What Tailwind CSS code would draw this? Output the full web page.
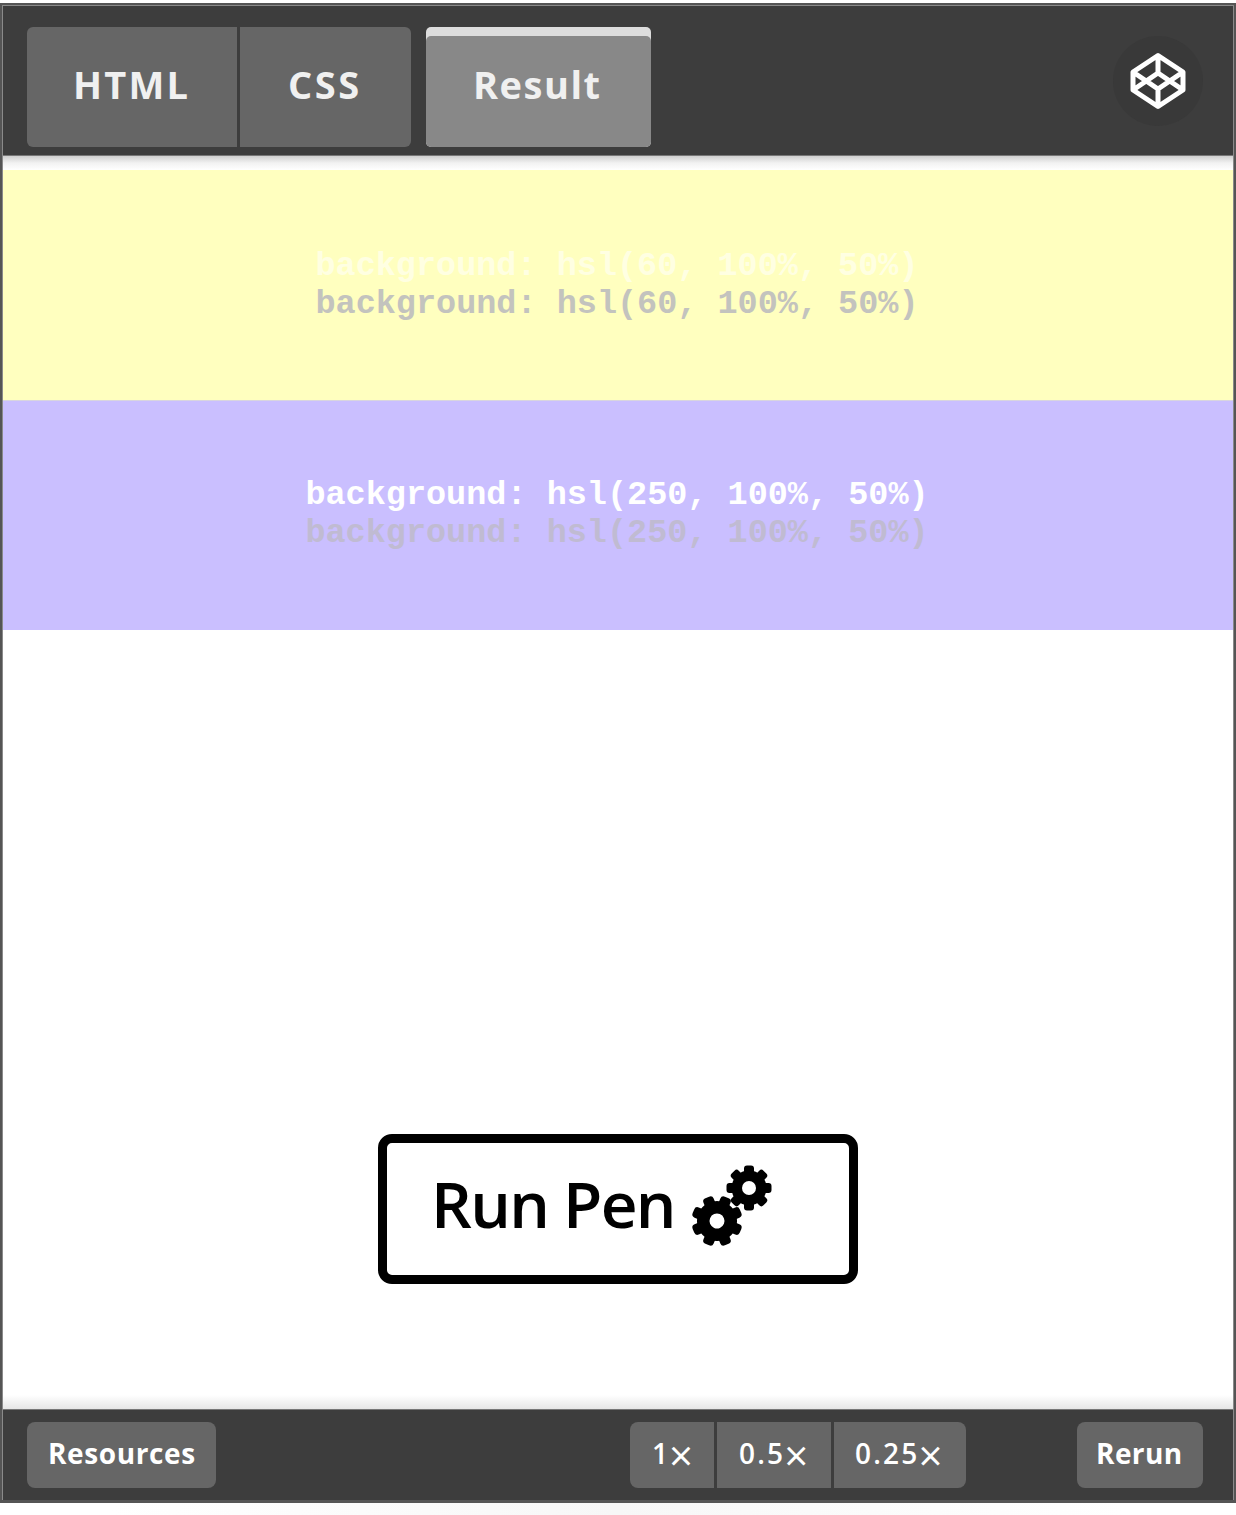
<!DOCTYPE html>
<html lang="en">
<head>
<meta charset="utf-8">
<title>Pen embed</title>
<script src="https://cdn.jsdelivr.net/npm/@tailwindcss/browser@4"></script>
</head>
<body class="bg-white overflow-hidden">
<div class="w-[1236px] h-[1515px] pt-[3px] flex flex-col overflow-hidden font-['Open_Sans',sans-serif] font-semibold text-white">
  <div class="relative z-10 h-[1500px] shrink-0 bg-[#555] pt-[2px] px-[2px] pb-[3px]">
    <div class="h-full flex flex-col border border-b-0 border-[#8a8a8a] bg-white">
      <header class="h-[150px] shrink-0 bg-[#3d3d3d] border-b border-[#777] flex pt-[21px] pl-6 pr-[30px]">
        <nav class="flex h-[120px] text-[38px] leading-[115px] text-[#f0f0f0] font-bold">
          <a class="w-[210px] bg-[#666] rounded-l-[6px] pl-[46px] tracking-[2.200px]">HTML</a>
          <a class="ml-[3px] w-[171px] bg-[#666] rounded-r-[6px] pl-[48px] tracking-[2.500px]">CSS</a>
          <a class="ml-[15px] w-[225px] bg-[#ddd] rounded-[5px] pt-[9px]"><span class="block h-[111px] bg-[#888] rounded-[5px] pl-[47px] leading-[97px] tracking-[1.500px]">Result</span></a>
        </nav>
        <a class="ml-auto mt-[9px] size-[90px] rounded-full bg-[#393939] flex items-center justify-center">
          <svg class="size-[66px]" viewBox="0 0 66 66" fill="none" stroke="#fff" stroke-width="5" stroke-linejoin="round">
            <path d="M33 7.500 58 24V42L33 58.500 8 42V24ZM33 7.500V25M33 41V58.500M8 24 33 41 58 24M8 42 33 25 58 42"/>
          </svg>
        </a>
      </header>
      <main class="flex-1 flex flex-col font-bold">
        <div class="h-[14px] bg-linear-to-b from-[#cfcfcf] via-[#f2f2f2] via-50% to-white"></div>
        <section class="h-[231px] bg-[#ffffbf] border-b border-[#d8d5df] flex flex-col items-center justify-center font-['Liberation_Mono',monospace] text-[33.500px] leading-[38px] pr-[2px]">
          <p class="text-[#ffffe2]">background: hsl(60, 100%, 50%)</p>
          <p class="text-[#c3c3be]">background: hsl(60, 100%, 50%)</p>
        </section>
        <section class="h-[229px] bg-[#cabfff] flex flex-col items-center justify-center font-['Liberation_Mono',monospace] text-[33.500px] leading-[38px] pr-[2px] pb-[3px]">
          <p>background: hsl(250, 100%, 50%)</p>
          <p class="text-[#c0bbd2]">background: hsl(250, 100%, 50%)</p>
        </section>
        <button class="mt-[504px] self-center w-[480px] h-[150px] border-[9px] border-black rounded-[14px] bg-white text-black flex items-center pl-[44px] font-semibold">
          <span class="w-[259px] text-left whitespace-nowrap text-[64px] leading-[80px] -mt-[10px] tracking-[-1.700px]">Run Pen</span>
          <svg class="size-[84px] -mt-[8px]" viewBox="0 0 84 84">
            <g transform="translate(27 58) rotate(22.500)">
              <circle r="13.500" fill="none" stroke="#000" stroke-width="13"/>
              <g stroke="#000" stroke-width="7" stroke-linejoin="round" fill="#000"><path d="M-2-22H2V22H-2ZM-22-2H22V2H-22Z"/><path transform="rotate(45)" d="M-2-22H2V22H-2ZM-22-2H22V2H-22Z"/></g>
              <circle r="7.500" fill="#fff"/>
            </g>
            <g transform="translate(59 25)">
              <circle r="12" fill="none" stroke="#000" stroke-width="11"/>
              <g stroke="#000" stroke-width="6" stroke-linejoin="round" fill="#000"><path d="M-2-19.500H2V19.500H-2ZM-19.500-2H19.500V2H-19.500Z"/><path transform="rotate(45)" d="M-2-19.500H2V19.500H-2ZM-19.500-2H19.500V2H-19.500Z"/></g>
              <circle r="7" fill="#fff"/>
            </g>
          </svg>
        </button>
        <div class="mt-auto h-[14px] bg-linear-to-b from-white to-[#e6e6e6]"></div>
      </main>
      <footer class="h-[91px] shrink-0 bg-[#3d3d3d] border-t border-[#777] flex pt-[12px] pl-6 pr-[30px] text-[28px] leading-[63px]">
        <a class="w-[189px] h-[66px] bg-[#666] rounded-[8px] pl-[21px] font-bold tracking-[0.600px]">Resources</a>
        <div class="ml-[414px] flex h-[66px]">
          <a class="w-[84px] h-[66px] flex bg-[#666] rounded-l-[8px] pl-[22px]">1<span class="ml-[1px] text-[42px] font-normal leading-[65px]">×</span></a>
          <a class="ml-[3px] w-[114px] h-[66px] flex bg-[#666] pl-[22px] tracking-[2.200px]">0.5<span class="-ml-[1px] text-[42px] font-normal leading-[65px]">×</span></a>
          <a class="ml-[3px] w-[132px] h-[66px] flex bg-[#666] rounded-r-[8px] pl-[21px] tracking-[2.200px]">0.25<span class="-ml-[1px] text-[42px] font-normal leading-[65px]">×</span></a>
        </div>
        <a class="ml-auto w-[126px] h-[66px] bg-[#666] rounded-[8px] pl-[19px] font-bold tracking-[0.400px]">Rerun</a>
      </footer>
    </div>
  </div>
  <div class="h-3 mx-[110px] bg-linear-to-r from-white via-[#f7f7f7] to-white"></div>
</div>
</body>
</html>
